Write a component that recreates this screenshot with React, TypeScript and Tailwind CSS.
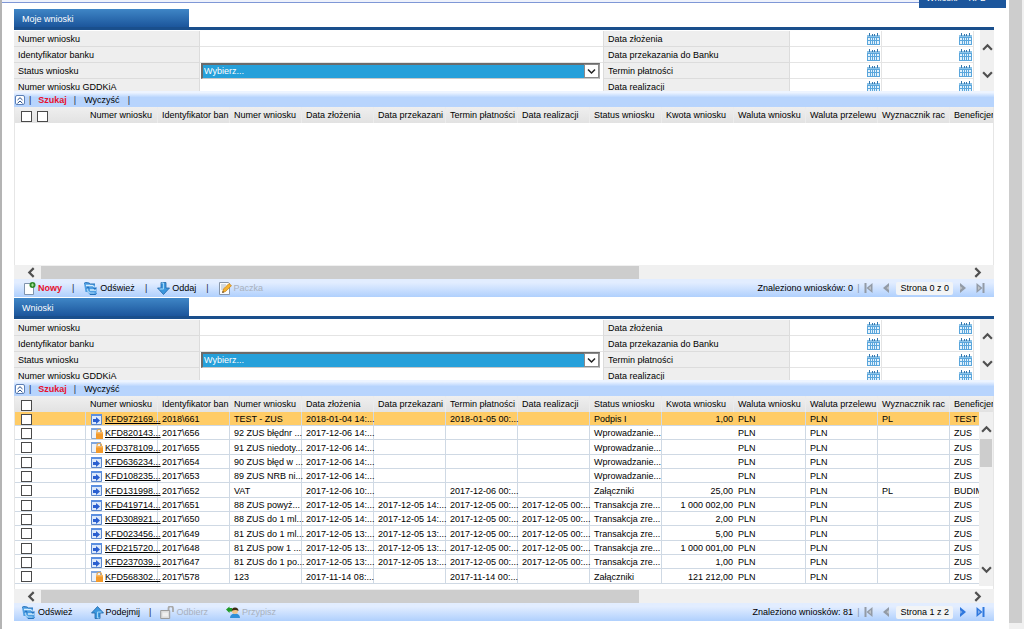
import type { ReactNode } from 'react'
import { clsx } from 'clsx'

type RowIcon = 'open' | 'locked'

interface Wniosek {
  numer: string
  icon: RowIcon
  bank: string
  opis: string
  zlozenie: string
  przekazanie: string
  termin: string
  realizacja: string
  status: string
  kwota: string
  rachunek: string
  beneficjent: string
}

const COLUMNS = [
  { key: 'numer', name: 'Numer wniosku' },
  { key: 'bank', name: 'Identyfikator ban' },
  { key: 'gddkia', name: 'Numer wniosku' },
  { key: 'zlozenie', name: 'Data złożenia' },
  { key: 'przekazanie', name: 'Data przekazani' },
  { key: 'termin', name: 'Termin płatności' },
  { key: 'realizacja', name: 'Data realizacji' },
  { key: 'status', name: 'Status wniosku' },
  { key: 'kwota', name: 'Kwota wniosku' },
  { key: 'walutaWniosku', name: 'Waluta wniosku' },
  { key: 'walutaPrzelewu', name: 'Waluta przelewu' },
  { key: 'rachunek', name: 'Wyznacznik rac' },
  { key: 'beneficjent', name: 'Beneficjen' },
]

function row(
  numer: string, icon: RowIcon, bank: string, opis: string, zlozenie: string, przekazanie: string, termin: string,
  realizacja: string, status: string, kwota: string, rachunek: string, beneficjent: string,
): Wniosek {
  return { numer, icon, bank, opis, zlozenie, przekazanie, termin, realizacja, status, kwota, rachunek, beneficjent }
}

const WNIOSKI: Wniosek[] = [
  row('KFD972169...', 'open', '2018\\661', 'TEST - ZUS', '2018-01-04 14:...', '', '2018-01-05 00:...', '', 'Podpis I', '1,00', 'PL', 'TEST -'),
  row('KFD820143...', 'locked', '2017\\656', '92 ZUS błędnr ...', '2017-12-06 14:...', '', '', '', 'Wprowadzanie...', '', '', 'ZUS'),
  row('KFD378109...', 'locked', '2017\\655', '91 ZUS niedoty...', '2017-12-06 14:...', '', '', '', 'Wprowadzanie...', '', '', 'ZUS'),
  row('KFD636234...', 'open', '2017\\654', '90 ZUS błęd w ...', '2017-12-06 14:...', '', '', '', 'Wprowadzanie...', '', '', 'ZUS'),
  row('KFD108235...', 'open', '2017\\653', '89 ZUS NRB ni...', '2017-12-06 14:...', '', '', '', 'Wprowadzanie...', '', '', 'ZUS'),
  row('KFD131998...', 'open', '2017\\652', 'VAT', '2017-12-06 10:...', '', '2017-12-06 00:...', '', 'Załączniki', '25,00', 'PL', 'BUDIM'),
  row('KFD419714...', 'open', '2017\\651', '88 ZUS powyż...', '2017-12-05 14:...', '2017-12-05 14:...', '2017-12-05 00:...', '2017-12-05 00:...', 'Transakcja zre...', '1 000 002,00', '', 'ZUS'),
  row('KFD308921...', 'open', '2017\\650', '88 ZUS do 1 ml...', '2017-12-05 14:...', '2017-12-05 14:...', '2017-12-05 00:...', '2017-12-05 00:...', 'Transakcja zre...', '2,00', '', 'ZUS'),
  row('KFD023456...', 'open', '2017\\649', '81 ZUS do 1 ml...', '2017-12-05 13:...', '2017-12-05 13:...', '2017-12-05 00:...', '2017-12-05 00:...', 'Transakcja zre...', '5,00', '', 'ZUS'),
  row('KFD215720...', 'open', '2017\\648', '81 ZUS pow 1 ...', '2017-12-05 13:...', '2017-12-05 13:...', '2017-12-05 00:...', '2017-12-05 00:...', 'Transakcja zre...', '1 000 001,00', '', 'ZUS'),
  row('KFD237039...', 'open', '2017\\647', '81 ZUS do 1 po...', '2017-12-05 13:...', '2017-12-05 13:...', '2017-12-05 00:...', '2017-12-05 00:...', 'Transakcja zre...', '1,00', '', 'ZUS'),
  row('KFD568302...', 'locked', '2017\\578', '123', '2017-11-14 08:...', '', '2017-11-14 00:...', '', 'Załączniki', '121 212,00', '', 'ZUS'),
]

function CalendarIcon() {
  return (
    <svg width="13" height="12" viewBox="0 0 13 12" shapeRendering="crispEdges" aria-hidden="true">
      <path d="M0 3h13v9H0z" fill="#5aa6dc" />
      <path d="M0 2h13v2H0z" fill="#8cc3e8" />
      <path d="M2 0h1v3H2zM5 1h1v2H5zM7 1h1v2H7zM10 0h1v3h-1z" fill="#3577ad" />
      <path d="M1 5h2v2H1zM4 5h1v2H4zM6 5h1v2H6zM8 5h1v2H8zM10 5h2v2h-2zM1 8h2v3H1zM4 8h1v3H4zM6 8h1v3H6zM8 8h1v3H8zM10 8h2v3h-2z" fill="#e3f2fc" />
    </svg>
  )
}

function Chevron({ dir }: { dir: 'up' | 'down' | 'left' | 'right' }) {
  const d = { up: 'M1 7l4-4 4 4', down: 'M1 3l4 4 4-4', left: 'M7 1L3 5l4 4', right: 'M3 1l4 4-4 4' }[dir]
  return (
    <svg width="11" height="11" viewBox="0 0 10 10" aria-hidden="true">
      <path d={d} fill="none" stroke="#505050" strokeWidth="2" />
    </svg>
  )
}

function OpenIcon() {
  return (
    <svg width="11" height="11" viewBox="0 0 11 11" className="shrink-0" aria-hidden="true">
      <path d="M.5.5h10v10H.5z" fill="#dce9fb" stroke="#5b87cc" />
      <path d="M0 0h11v2H0z" fill="#5b8fe0" />
      <path d="M2 5h3V3l4 3.500-4 3.500V8H2z" fill="#2a5fd0" />
    </svg>
  )
}

function LockedIcon() {
  return (
    <svg width="12" height="11" viewBox="0 0 12 11" className="shrink-0" aria-hidden="true">
      <path d="M.5.5h9v10h-9z" fill="#eef3fa" stroke="#8fa9cc" />
      <path d="M0 0h10v2H0z" fill="#7fa6df" />
      <path d="M6 5V3.500a2.200 2.200 0 014.500 0V5" fill="none" stroke="#e0a95a" strokeWidth="1.200" />
      <path d="M5 4h7v7H5z" fill="#f39a2b" />
      <path d="M5 4h7v1.500H5z" fill="#f8b863" />
    </svg>
  )
}

function NewIcon() {
  return (
    <svg width="12" height="13" viewBox="0 0 12 13" aria-hidden="true">
      <path d="M.5 1.500h9v11h-9z" fill="#fdfefe" stroke="#7f93ad" />
      <circle cx="8.500" cy="3" r="3" fill="#2f8a2a" />
      <path d="M8.500 1.500v3M7 3h3" stroke="#a9e29a" />
    </svg>
  )
}

function RefreshIcon() {
  return (
    <svg width="14" height="13" viewBox="0 0 14 13" aria-hidden="true">
      <path d="M0 1.500L1.500.5 5 1l1.500 1H11v4h1.500v6l-1 1H6l-2.500-3H1.500z" fill="#4f9fe3" />
      <path d="M2 3.500h6.500a3 3 0 012 2.500M12 8H6" fill="none" stroke="#d8eefc" strokeWidth="1.300" />
      <path d="M3.500 6a4 4 0 003 5h4" fill="none" stroke="#a5d3f5" strokeWidth="1.200" />
      <path d="M8.500 5.500h4.500L11 8zM2 6.500h4L4 4.200z" fill="#2272c2" />
      <path d="M0 1.500L1.500.5 5 1l1.500 1H11M6 12.500h5.500l1-1" fill="none" stroke="#2570b8" />
    </svg>
  )
}

function ArrowIcon({ up = false }: { up?: boolean }) {
  return (
    <svg width="13" height="13" viewBox="0 0 13 13" className={clsx(up && 'rotate-180')} aria-hidden="true">
      <path d="M4 .5h5V6h3.500l-6 6.500-6-6.500H4z" fill="#3c97dd" stroke="#1e66a8" strokeWidth=".8" />
      <path d="M4.500 1h2v6H2.500" fill="none" stroke="#9fd5f7" />
    </svg>
  )
}

function PencilIcon() {
  return (
    <svg width="13" height="13" viewBox="0 0 13 13" aria-hidden="true">
      <path d="M.5.5h9l1 1v11H.5z" fill="#fbfbfb" stroke="#8795a8" />
      <path d="M2 3h5M2 5h4M2 7h3" stroke="#a9b8ca" />
      <path d="M3.500 10.500l1-3.500L10 1.500l2.500 2.200L6.500 9.500z" fill="#f5b32f" stroke="#c07a14" strokeWidth=".7" />
      <path d="M3.300 10.800l.5-1.700 1.300 1.100z" fill="#333" />
    </svg>
  )
}

function UnlockIcon() {
  return (
    <svg width="14" height="13" viewBox="0 0 14 13" aria-hidden="true">
      <path d="M8.500 5V2.500a2.200 2.200 0 014.500 0V6" fill="none" stroke="#a9a9a9" strokeWidth="1.800" />
      <path d="M.7 4.500h9v8h-9z" fill="#dcdcdc" stroke="#9b9b9b" />
      <path d="M2.500 6.500h5.500v4H2.500z" fill="#efefef" />
    </svg>
  )
}

function AssignIcon() {
  return (
    <svg width="14" height="12" viewBox="0 0 14 12" aria-hidden="true">
      <path d="M4 12c0-3 2-4.500 5-4.500s5 1.500 5 4.500z" fill="#2f8fd8" />
      <circle cx="9" cy="5" r="3" fill="#f0c48a" />
      <path d="M5.500 5a3.500 3.500 0 017 0C11 3.800 8 3.800 5.500 5z" fill="#3d2a12" />
      <path d="M0 3.500L3.500.5v1.500H6v3.500H3.500V7z" fill="#1f9a27" />
    </svg>
  )
}

function PagerIcon({ dir, end, active }: { dir: 'prev' | 'next'; end?: boolean; active?: boolean }) {
  const color = active ? '#2f78de' : '#939ba6'
  return (
    <svg width="9" height="10" viewBox="0 0 9 10" className={clsx(dir === 'next' && 'rotate-180')} aria-hidden="true">
      <path d={end ? 'M8.500 0v10L2.500 5z' : 'M7 0v10L1 5z'} fill={color} />
      {end && <path d="M1.500 0v10" stroke={color} strokeWidth="2" />}
      <path d="M7 3v4L4.500 5z" fill="#fff" opacity=".4" />
    </svg>
  )
}

function Sep() {
  return <span className="text-[#1f2c44]">|</span>
}

function Checkbox({ label }: { label: string }) {
  return (
    <input
      type="checkbox"
      aria-label={label}
      className="block size-[11px] shrink-0 appearance-none border border-[#4a4a4a] bg-white checked:bg-[#26a0da]"
    />
  )
}

function ToolButton({ icon, children, muted, red }: { icon: ReactNode; children: ReactNode; muted?: boolean; red?: boolean }) {
  return (
    <button
      type="button"
      disabled={muted}
      className={clsx('flex items-center gap-[2px]', red && 'font-bold text-[#e8112d]', muted && 'text-[#a9b1bd]')}
    >
      {icon}
      {children}
    </button>
  )
}

function VScroll({ className, thumb }: { className?: string; thumb?: boolean }) {
  return (
    <div className={clsx('flex w-[14px] flex-col items-center bg-[#f0f0f0]', className)}>
      <button type="button" aria-label="W górę" className="flex h-4 items-center"><Chevron dir="up" /></button>
      <div className="w-full flex-1 px-px pt-[2px]">
        {thumb && <div className="h-7 w-full bg-[#cdcdcd]" />}
      </div>
      <button type="button" aria-label="W dół" className="flex h-4 items-center"><Chevron dir="down" /></button>
    </div>
  )
}

function HScroll() {
  return (
    <div className="flex h-[14px] items-center bg-[#f0f0f0]">
      <button type="button" aria-label="W lewo" className="flex w-[27px] justify-center pl-2"><Chevron dir="left" /></button>
      <div className="h-[13px] flex-1">
        <div className="h-full w-[65%] bg-[#cdcdcd]" />
      </div>
      <button type="button" aria-label="W prawo" className="flex w-[33px] justify-center"><Chevron dir="right" /></button>
    </div>
  )
}

const FIELDS = [
  ['Numer wniosku', 'Data złożenia'],
  ['Identyfikator banku', 'Data przekazania do Banku'],
  ['Status wniosku', 'Termin płatności'],
  ['Numer wniosku GDDKiA', 'Data realizacji'],
]

function DateField({ id, label }: { id?: string; label: string }) {
  return (
    <div className="flex items-center border-r border-b border-[#e4e4e4] bg-white">
      <input id={id} aria-label={label} type="text" className="w-0 min-w-0 flex-1 outline-none" />
      <button type="button" aria-label={`Kalendarz: ${label}`} className="mr-px"><CalendarIcon /></button>
    </div>
  )
}

function SearchForm({ id }: { id: string }) {
  return (
    <form className="flex h-[61px] overflow-hidden">
      <div className="grid flex-1 auto-rows-[16px] grid-cols-[186px_1fr_187px_92px_92px] pt-px pr-[6px]">
        {FIELDS.map(([left, right], i) => (
          <div key={left} className="contents">
            <label htmlFor={`${id}-l${i}`} className="border-r border-b border-[#dcdcdc] bg-[#eeeeee] pl-1 leading-[17px]">{left}</label>
            {left === 'Status wniosku' ? (
              <div className="relative px-px pr-[3px]">
                <select
                  id={`${id}-l${i}`}
                  className="block h-4 w-full appearance-none border-2 border-r border-b border-[#6b6b6b] border-r-[#a0a0a0] border-b-[#c8c8c8] bg-[#26a0da] pr-4 pl-px leading-[13px] text-white outline-none"
                >
                  <option>Wybierz...</option>
                </select>
                <span className="pointer-events-none absolute top-px right-1 flex h-[14px] w-[15px] items-center justify-center border border-[#8a8a8a] bg-white">
                  <svg width="9" height="7" viewBox="0 0 9 7" aria-hidden="true">
                    <path d="M1 1.500l3.500 3.500L8 1.500" fill="none" stroke="#222" strokeWidth="1.500" />
                  </svg>
                </span>
              </div>
            ) : (
              <input id={`${id}-l${i}`} type="text" className="min-w-0 border-b border-[#e4e4e4] px-1 outline-none" />
            )}
            <label htmlFor={`${id}-r${i}`} className="border-r border-b border-l border-[#dcdcdc] bg-[#eeeeee] pl-1 leading-[17px]">{right}</label>
            <DateField id={`${id}-r${i}`} label={`${right} od`} />
            <DateField label={`${right} do`} />
          </div>
        ))}
      </div>
      <VScroll className="pt-[9px] pb-[9px]" />
    </form>
  )
}

function SearchBar({ trailing }: { trailing?: boolean }) {
  return (
    <div className="flex h-4 items-center gap-[7px] bg-linear-to-b from-[#edf4ff] from-10% to-[#b7d4fd] to-40% pt-[2px]">
      <div className="flex items-center gap-1 pl-px">
        <button type="button" aria-label="Zwiń" className="flex size-[10px] items-center justify-center rounded-[2px] border border-[#5c7fb5] bg-white">
          <svg width="6" height="7" viewBox="0 0 6 7" aria-hidden="true">
            <path d="M.5 3L3 .7 5.500 3M.5 6.300L3 4l2.500 2.300" fill="none" stroke="#234a86" />
          </svg>
        </button>
        <Sep />
      </div>
      <button type="button" className="font-bold text-[#e8112d]">Szukaj</button>
      <Sep />
      <button type="button" className="px-px">Wyczyść</button>
      {trailing && <Sep />}
    </div>
  )
}

function Toolbar({ children, found, page, next }: { children: ReactNode; found: number; page: string; next?: boolean }) {
  return (
    <div className="flex h-[18px] items-center bg-linear-to-b from-[#e2edff] from-20% to-[#b0d0fd] pr-[9px]">
      {children}
      <div className="ml-auto flex items-center">
        <span>Znaleziono wniosków: {found}</span>
        <span className="mx-1 text-[#8895a8]">|</span>
        <div className="flex items-center gap-[9px]">
          <button type="button" aria-label="Pierwsza" className="ml-px"><PagerIcon dir="prev" end /></button>
          <button type="button" aria-label="Poprzednia"><PagerIcon dir="prev" /></button>
        </div>
        <span className="mx-[5px] rounded-[2px] bg-[#f2f4f6] px-1 leading-[13px]">{page}</span>
        <div className="flex items-center gap-[9px]">
          <button type="button" aria-label="Następna"><PagerIcon dir="next" active={next} /></button>
          <button type="button" aria-label="Ostatnia"><PagerIcon dir="next" end active={next} /></button>
        </div>
      </div>
    </div>
  )
}

function Cell({ children, last }: { children?: ReactNode; last?: boolean }) {
  return (
    <td className={clsx('border-b border-[#cfd9e4] pt-px pl-1', !last && 'border-r')}>{children}</td>
  )
}

function Results({ rows, selectBoxes, className }: { rows: Wniosek[]; selectBoxes: string[]; className: string }) {
  return (
    <div className={clsx('relative overflow-hidden border-x border-[#e6e6e6]', className)}>
      <table className="-ml-px w-[1008px] table-fixed border-separate border-spacing-0 bg-white leading-[12px] whitespace-nowrap">
        <thead>
          <tr className="h-4 bg-linear-to-b from-[#efefef] to-[#e2e2e2]">
            <th className="p-0 pl-[7px]">
              <div className="flex gap-[5px] pt-[3px]">
                {selectBoxes.map(label => <Checkbox key={label} label={label} />)}
              </div>
            </th>
            {COLUMNS.map(col => (
              <th key={col.key} className="border-r border-[#ececec] py-0 pl-1 text-left font-normal">{col.name}</th>
            ))}
          </tr>
        </thead>
        <tbody>
          {rows.map((w, i) => (
            <tr key={w.numer} className={clsx('h-[14px] nth-[3n]:h-[15px]', i === 0 && 'bg-[#ffcc66]')}>
              <td className="border-r border-b border-[#cfd9e4] pt-px pl-[7px]"><Checkbox label={w.numer} /></td>
              <Cell>
                <div className="flex items-center gap-[3px] pl-px">
                  <span className="flex w-[11px]">{w.icon === 'open' ? <OpenIcon /> : <LockedIcon />}</span>
                  <a href="#" className="underline">{w.numer}</a>
                </div>
              </Cell>
              <Cell>{w.bank}</Cell>
              <Cell>{w.opis}</Cell>
              <Cell>{w.zlozenie}</Cell>
              <Cell>{w.przekazanie}</Cell>
              <Cell>{w.termin}</Cell>
              <Cell>{w.realizacja}</Cell>
              <Cell>{w.status}</Cell>
              <td className="border-b border-[#cfd9e4] pt-px pr-px text-right">{w.kwota}</td>
              <Cell>PLN</Cell>
              <Cell>PLN</Cell>
              <Cell>{w.rachunek}</Cell>
              <Cell last>{w.beneficjent}</Cell>
            </tr>
          ))}
        </tbody>
      </table>
      {rows.length > 0 && <VScroll thumb className="absolute top-4 right-0 bottom-[3px] pt-[9px] pb-[9px]" />}
    </div>
  )
}

function Section({ title, children }: { title: string; children: ReactNode }) {
  return (
    <section>
      <div className="border-b-[3px] border-[#1a4f8c]">
        <h2 className="h-[18px] w-[175px] bg-linear-to-b from-[#3f86c6] to-[#1c569c] pl-2 leading-[21px] text-white">{title}</h2>
      </div>
      {children}
    </section>
  )
}

export default function App() {
  return (
    <div className="flex min-h-screen bg-white font-['Liberation_Sans',Arial,sans-serif] text-[9px] leading-[13px] text-black">
      <div className="min-w-0 flex-1 border-l-2 border-[#b4b4b4]">
        <header className="flex h-[9px] items-start pr-[3px]">
          <div className="h-[3px] flex-1 border-b border-[#7f97d6] bg-[#eef2fc]" />
          <div className="flex h-2 w-[87px] items-end gap-1 overflow-hidden bg-[#1c569c] pb-[3px] pl-[7px] text-white">
            <span>Wnioski</span>
            <span>-</span>
            <span>KFD</span>
          </div>
        </header>

        <main className="flex flex-col gap-px pr-[15px] pl-3">
          <Section title="Moje wnioski">
            <SearchForm id="moje" />
            <SearchBar trailing />
            <Results rows={[]} selectBoxes={['Zaznacz wszystkie', 'Zaznacz stronę']} className="min-h-[158px]" />
            <HScroll />
            <Toolbar found={0} page="Strona 0 z 0">
              <div className="flex items-center gap-[10px] pl-[10px]">
                <ToolButton icon={<NewIcon />} red>Nowy</ToolButton>
                <Sep />
                <ToolButton icon={<RefreshIcon />}>Odśwież</ToolButton>
                <Sep />
                <ToolButton icon={<ArrowIcon />}>Oddaj</ToolButton>
                <Sep />
                <ToolButton icon={<PencilIcon />} muted>Paczka</ToolButton>
              </div>
            </Toolbar>
          </Section>

          <Section title="Wnioski">
            <SearchForm id="wnioski" />
            <SearchBar />
            <Results rows={WNIOSKI} selectBoxes={['Zaznacz wszystkie']} className="min-h-[193px]" />
            <HScroll />
            <Toolbar found={81} page="Strona 1 z 2" next>
              <div className="flex items-center gap-[18px] pl-2">
                <ToolButton icon={<RefreshIcon />}>Odśwież</ToolButton>
                <div className="flex items-center gap-[9px]">
                  <ToolButton icon={<ArrowIcon up />}>Podejmij</ToolButton>
                  <Sep />
                  <ToolButton icon={<UnlockIcon />} muted>Odbierz</ToolButton>
                </div>
                <ToolButton icon={<AssignIcon />} muted>Przypisz</ToolButton>
              </div>
            </Toolbar>
          </Section>
        </main>
      </div>

      <div className="flex w-[15px] flex-col bg-[#f0f0f0] pr-[2px] pb-[6px]">
        <div className="flex-1 bg-[#cdcdcd]" />
      </div>
    </div>
  )
}
